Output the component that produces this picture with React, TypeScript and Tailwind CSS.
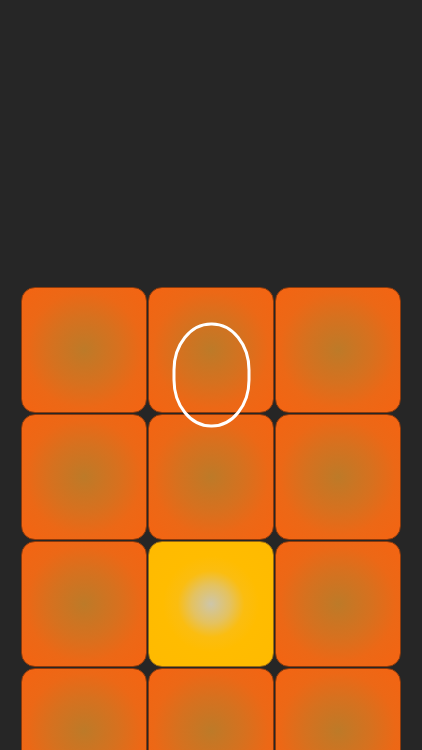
const tiles = [
  "orange", "orange", "orange",
  "orange", "orange", "orange",
  "orange", "yellow", "orange",
  "orange", "orange", "orange",
];

function Tile({ kind }: { kind: string }) {
  const fill =
    kind === "yellow"
      ? "bg-[radial-gradient(circle_at_center,#cdc6aa_0%,#e4c260_22%,#fbbd10_38%,#ffbc00_55%,#ffba00_100%)] border-[#9a6a10]"
      : "bg-[radial-gradient(circle_at_center,#bd7a28_0%,#d6711f_38%,#ec6816_66%,#f46412_100%)] border-[#8c3a0c]";
  return <div className={`h-[126px] rounded-[14px] border ${fill}`} />;
}

export default function App() {
  return (
    <div className="h-[750px] w-full overflow-hidden bg-[#262626]">
      <div className="relative pt-[287px] px-[21px]">
        <div className="grid grid-cols-3 gap-px">
          {tiles.map((kind, i) => (
            <Tile key={i} kind={kind} />
          ))}
        </div>
        {/* drawn "zero" mark over the middle tile */}
        <svg
          className="absolute left-[172px] top-[322px]"
          width="79"
          height="106"
          viewBox="0 0 79 106"
        >
          <rect
            x="2"
            y="2"
            width="75"
            height="102"
            rx="37"
            ry="46"
            fill="none"
            stroke="#ffffff"
            strokeWidth="3"
          />
        </svg>
      </div>
    </div>
  );
}
